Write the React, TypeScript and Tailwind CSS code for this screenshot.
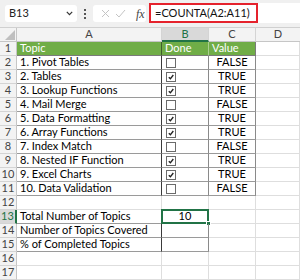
import React from 'react';

const topics = [
  { name: '1. Pivot Tables', done: false },
  { name: '2. Tables', done: true },
  { name: '3. Lookup Functions', done: true },
  { name: '4. Mail Merge', done: false },
  { name: '5. Data Formatting', done: true },
  { name: '6. Array Functions', done: true },
  { name: '7. Index Match', done: false },
  { name: '8. Nested IF Function', done: true },
  { name: '9. Excel Charts', done: true },
  { name: '10. Data Validation', done: false },
];

const font = { fontFamily: 'Lato, "Liberation Sans", sans-serif' };

function CheckBox({ checked }: { checked: boolean }) {
  return (
    <div className="ml-[4px] flex h-[10px] w-[10px] items-center justify-center border border-[#6b6b6b] bg-white">
      {checked && (
        <svg width="6" height="6" viewBox="0 0 6 6">
          <path d="M0.8 3.2 L2.4 4.8 L5.3 1" fill="none" stroke="#222" strokeWidth="1.4" />
        </svg>
      )}
    </div>
  );
}

function RowHead({ n, active }: { n: number; active?: boolean }) {
  return (
    <div
      className={
        'flex h-full w-[17px] shrink-0 items-center justify-center border-b border-[#d4d4d4] text-[11px] ' +
        (active
          ? 'border-r-2 border-r-[#217346] bg-[#d9d9d9] text-[#217346]'
          : 'border-r border-r-[#c6c6c6] bg-[#f3f3f3] text-[#444]')
      }
    >
      {n}
    </div>
  );
}

function Row({ children }: { children: React.ReactNode }) {
  return <div className="flex h-[14px]">{children}</div>;
}

const grid = 'border-r border-b border-[#dedede]';

export default function App() {
  return (
    <div className="h-[280px] w-[300px] overflow-hidden bg-white text-[11px] text-black" style={font}>
      {/* formula bar */}
      <div className="flex h-[28px] items-start border-b border-[#d0d0d0] bg-[#f0f0f0] pt-[3px]">
        <div className="ml-[5px] mt-[2px] flex h-[17px] w-[72px] items-center justify-between rounded-[3px] bg-white pl-[4px] pr-[4px] text-[11px] text-[#222]">
          <span>B13</span>
          <svg width="7" height="5" viewBox="0 0 7 5">
            <path d="M0.8 0.8 L3.5 3.6 L6.2 0.8" fill="none" stroke="#333" strokeWidth="1.2" />
          </svg>
        </div>
        <div className="ml-[6px] mt-[6px] flex w-[4px] flex-col items-center gap-[2px]">
          <div className="h-[2px] w-[2px] bg-[#555]" />
          <div className="h-[2px] w-[2px] bg-[#555]" />
          <div className="h-[2px] w-[2px] bg-[#555]" />
        </div>
        <div className="ml-[6px] mt-[2px] flex h-[17px] w-[53px] items-center gap-[5px] rounded-[3px] bg-white pl-[8px]">
          <svg width="9" height="9" viewBox="0 0 9 9">
            <path d="M1 1 L8 8 M8 1 L1 8" stroke="#c4c4c4" strokeWidth="1" />
          </svg>
          <svg width="11" height="9" viewBox="0 0 11 9">
            <path d="M1 5 L4 8 L10 1" fill="none" stroke="#c4c4c4" strokeWidth="1" />
          </svg>
          <span className="ml-[5px] italic text-[#444]" style={{ fontFamily: '"Liberation Serif", serif', fontSize: 12 }}>
            fx
          </span>
        </div>
        <div className="relative ml-[3px] flex h-[20px] flex-1 items-center bg-white pl-[6px] text-[11px] text-[#111]">
          =COUNTA(A2:A11)
          <div className="absolute left-0 top-0 h-[20px] w-[109px] border-2 border-[#e5222c]" />
        </div>
      </div>

      {/* column headers */}
      <Row>
        <div className="relative h-full w-[17px] shrink-0 border-r border-b border-[#c6c6c6] bg-[#f3f3f3]">
          <svg className="absolute bottom-[1px] right-[1px]" width="10" height="10" viewBox="0 0 10 10">
            <path d="M10 0 L10 10 L0 10 Z" fill="#bfbfbf" />
          </svg>
        </div>
        <div className="flex h-full w-[145px] items-center justify-center border-r border-b border-r-[#d4d4d4] border-b-[#c6c6c6] bg-[#f3f3f3] text-[#444]">A</div>
        <div className="flex h-full w-[47px] items-center justify-center border-r border-b-2 border-r-[#d4d4d4] border-b-[#217346] bg-[#d9d9d9] text-[#217346]">B</div>
        <div className="flex h-full w-[47px] items-center justify-center border-r border-b border-r-[#d4d4d4] border-b-[#c6c6c6] bg-[#f3f3f3] text-[#444]">C</div>
        <div className="flex h-full flex-1 items-center justify-center border-b border-[#c6c6c6] bg-[#f3f3f3] text-[#444]">D</div>
      </Row>

      {/* row 1 */}
      <Row>
        <RowHead n={1} />
        <div className="flex h-full w-[145px] items-center border-r border-b border-r-[#3f5e2b] border-b-[#7a7a7a] bg-[#70ad47] pl-[3px] text-white">Topic</div>
        <div className="flex h-full w-[47px] items-center border-r border-b border-r-[#a9cf8f] border-b-[#7a7a7a] bg-[#70ad47] pl-[3px] text-white">Done</div>
        <div className="flex h-full w-[47px] items-center border-r border-b border-r-[#7a7a7a] border-b-[#7a7a7a] bg-[#70ad47] pl-[3px] text-white">Value</div>
        <div className={'h-full flex-1 ' + grid} />
      </Row>

      {topics.map((t, i) => (
        <Row key={t.name}>
          <RowHead n={i + 2} />
          <div className="flex h-full w-[145px] items-center border-r border-b border-r-[#3a3a3a] border-b-[#9a9a9a] pl-[3px]">{t.name}</div>
          <div className="flex h-full w-[47px] items-center border-r border-b border-r-[#8a8a8a] border-b-[#9a9a9a]">
            <CheckBox checked={t.done} />
          </div>
          <div className="flex h-full w-[47px] items-center justify-center border-r border-b border-r-[#8a8a8a] border-b-[#9a9a9a]">
            {t.done ? 'TRUE' : 'FALSE'}
          </div>
          <div className={'h-full flex-1 ' + grid} />
        </Row>
      ))}

      {/* row 12 */}
      <Row>
        <RowHead n={12} />
        <div className={'h-full w-[145px] ' + grid} />
        <div className={'h-full w-[47px] ' + grid} />
        <div className={'h-full w-[47px] ' + grid} />
        <div className={'h-full flex-1 ' + grid} />
      </Row>

      {[
        { n: 13, label: 'Total Number of Topics', value: '10' },
        { n: 14, label: 'Number of Topics Covered', value: '' },
        { n: 15, label: '% of Completed Topics', value: '' },
      ].map((r) => (
        <Row key={r.n}>
          <RowHead n={r.n} active={r.n === 13} />
          <div className="flex h-full w-[145px] items-center border-r border-b border-r-[#3a3a3a] border-b-[#9a9a9a] pl-[3px]">{r.label}</div>
          <div className="relative flex h-full w-[47px] items-center justify-center border-r border-b border-r-[#8a8a8a] border-b-[#9a9a9a]">
            {r.value}
            {r.n === 13 && (
              <>
                <div className="absolute left-[-1px] top-[-1px] h-[15px] w-[48px] border-2 border-[#217346]" />
                <div className="absolute bottom-[-3px] right-[-3px] h-[5px] w-[5px] border border-white bg-[#217346]" />
              </>
            )}
          </div>
          <div className={'h-full w-[47px] ' + grid} />
          <div className={'h-full flex-1 ' + grid} />
        </Row>
      ))}

      {[16, 17].map((n) => (
        <Row key={n}>
          <RowHead n={n} />
          <div className={'h-full w-[145px] ' + grid} />
          <div className={'h-full w-[47px] ' + grid} />
          <div className={'h-full w-[47px] ' + grid} />
          <div className={'h-full flex-1 ' + grid} />
        </Row>
      ))}
    </div>
  );
}
